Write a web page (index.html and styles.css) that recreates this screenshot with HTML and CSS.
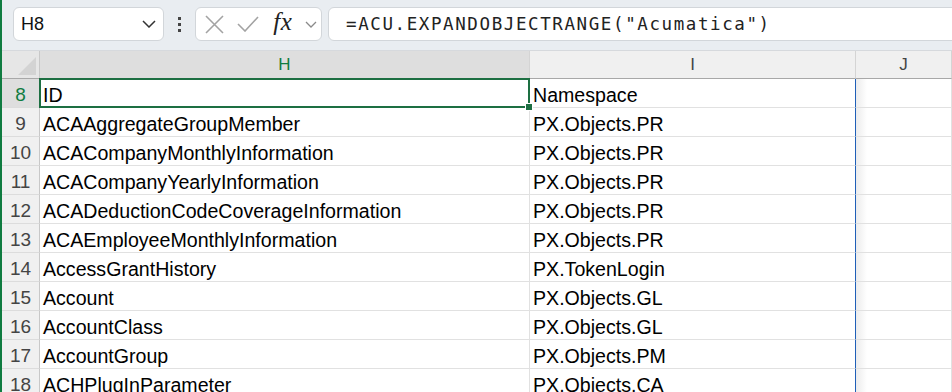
FILE: index.html
```html
<!DOCTYPE html>
<html>
	<head>
		<meta charset="utf-8">
		<title>Excel - ACU.EXPANDOBJECTRANGE</title>
		<link rel="stylesheet" href="styles.css">
	</head>
	<body>
		<div class="app">
			<!-- formula bar -->
			<div class="toolbar">
				<div class="namebox">
					<span class="ref">H8</span>
					<svg class="chev" width="14" height="8" viewBox="0 0 14 8"><path d="M1 1l6 6 6-6" fill="none" stroke="#333" stroke-width="1.5"/></svg>
				</div>
				<div class="more">
					<i></i><i></i><i></i>
				</div>
				<div class="fxbtns">
					<svg width="19" height="19" viewBox="0 0 19 19"><path d="M1 1l17 17M18 1L1 18" fill="none" stroke="#a3a3a3" stroke-width="1.6"/></svg>
					<svg width="22" height="16" viewBox="0 0 22 16"><path d="M1 8l7 7L21 1" fill="none" stroke="#a3a3a3" stroke-width="1.6"/></svg>
					<span class="fx">fx</span>
					<svg width="12" height="7" viewBox="0 0 12 7"><path d="M1 1l5 5 5-5" fill="none" stroke="#8a8a8a" stroke-width="1.3"/></svg>
				</div>
				<div class="formula">=ACU.EXPANDOBJECTRANGE("Acumatica")</div>
			</div>

			<!-- sheet -->
			<div class="sheet">
				<div class="corner"><span class="tri"></span></div>
				<div class="colhead sel">H</div>
				<div class="colhead">I</div>
				<div class="colhead">J</div>

				<div class="rowhead sel">8</div>
				<div class="cell active">ID</div>
				<div class="cell edge">Namespace</div>
				<div class="cell shade"></div>

				<div class="rowhead">9</div>
				<div class="cell">ACAAggregateGroupMember</div>
				<div class="cell edge">PX.Objects.PR</div>
				<div class="cell shade"></div>

				<div class="rowhead">10</div>
				<div class="cell">ACACompanyMonthlyInformation</div>
				<div class="cell edge">PX.Objects.PR</div>
				<div class="cell shade"></div>

				<div class="rowhead">11</div>
				<div class="cell">ACACompanyYearlyInformation</div>
				<div class="cell edge">PX.Objects.PR</div>
				<div class="cell shade"></div>

				<div class="rowhead">12</div>
				<div class="cell">ACADeductionCodeCoverageInformation</div>
				<div class="cell edge">PX.Objects.PR</div>
				<div class="cell shade"></div>

				<div class="rowhead">13</div>
				<div class="cell">ACAEmployeeMonthlyInformation</div>
				<div class="cell edge">PX.Objects.PR</div>
				<div class="cell shade"></div>

				<div class="rowhead">14</div>
				<div class="cell">AccessGrantHistory</div>
				<div class="cell edge">PX.TokenLogin</div>
				<div class="cell shade"></div>

				<div class="rowhead">15</div>
				<div class="cell">Account</div>
				<div class="cell edge">PX.Objects.GL</div>
				<div class="cell shade"></div>

				<div class="rowhead">16</div>
				<div class="cell">AccountClass</div>
				<div class="cell edge">PX.Objects.GL</div>
				<div class="cell shade"></div>

				<div class="rowhead">17</div>
				<div class="cell">AccountGroup</div>
				<div class="cell edge">PX.Objects.PM</div>
				<div class="cell shade"></div>

				<div class="rowhead">18</div>
				<div class="cell">ACHPlugInParameter</div>
				<div class="cell edge">PX.Objects.CA</div>
				<div class="cell shade"></div>
			</div>
		</div>
	</body>
</html>
```

FILE: styles.css
```css
html,
body {
	margin: 0;
	height: 100%;
	overflow: hidden;
	background: #fff;
}

.app {
	height: 100%;
	border-left: 2px solid #107c41;
	font-family: "Liberation Sans", Arial, sans-serif;
	color: #000;
}

/* formula bar */
.toolbar {
	height: 51px;
	border-bottom: 1px solid #d6d9dd;
	background: #e9edf1;
	display: flex;
	align-items: flex-start;
	padding: 7px 0 0 11px;
	box-sizing: border-box;
	overflow: hidden;
}

.namebox,
.fxbtns,
.formula {
	height: 34px;
	box-sizing: border-box;
	background: #fff;
	border: 1px solid #d2d6da;
	border-radius: 6px;
	display: flex;
	align-items: center;
}

.namebox {
	width: 151px;
	padding: 0 7px 0 7px;
	justify-content: space-between;
}

.namebox .ref {
	font-size: 18px;
	color: #111;
}

.more {
	width: 4px;
	margin: 10px 13px 0 14px;
	display: flex;
	flex-direction: column;
	gap: 3px;
}

.more i {
	width: 3px;
	height: 3px;
	background: #444;
	display: block;
}

.fxbtns {
	width: 127px;
	margin-right: 6px;
	padding: 0 4px 0 9px;
	gap: 0;
	justify-content: space-between;
}

.fx {
	font-family: "Liberation Serif", "Times New Roman", serif;
	font-style: italic;
	font-size: 25px;
	color: #222;
	margin: -4px 0 0 2px;
	letter-spacing: 0.5px;
}

.formula {
	flex: 1;
	margin-right: -12px;
	padding-left: 17px;
	font-family: "DejaVu Sans Mono", "Liberation Mono", monospace;
	font-size: 17.5px;
	letter-spacing: 1.6px;
	color: #222;
}

/* sheet grid */
.sheet {
	display: grid;
	grid-template-columns: 38px 490px 326px 96px;
	grid-template-rows: 28px;
	grid-auto-rows: 29px;
}

.sheet > div {
	box-sizing: border-box;
	border-right: 1px solid #e1e1e1;
	border-bottom: 1px solid #e1e1e1;
}

.corner {
	background: #e6e6e6;
	position: relative;
	border-bottom: 1px solid #a8a8a8 !important;
	border-right: 1px solid #c8c8c8 !important;
}

.corner .tri {
	position: absolute;
	right: 3px;
	bottom: 3px;
	width: 0;
	height: 0;
	border-left: 18px solid transparent;
	border-bottom: 18px solid #d3d3d3;
}

.colhead {
	background: #f0f0f0;
	border-right-color: #d4d4d4 !important;
	border-bottom: 1px solid #a8a8a8 !important;
	display: flex;
	align-items: center;
	justify-content: center;
	font-size: 17px;
	color: #444;
	padding-top: 1px;
}

.colhead.sel {
	background: #dedede;
	color: #107c41;
}

.rowhead {
	background: #f0f0f0;
	border-right: 1px solid #c8c8c8 !important;
	border-bottom-color: #dcdcdc !important;
	display: flex;
	align-items: center;
	justify-content: center;
	font-size: 19px;
	color: #444;
	padding-top: 3px;
}

.rowhead.sel {
	background: #dedede;
	color: #107c41;
}

.cell {
	font-size: 19.6px;
	line-height: 29px;
	padding: 2px 0 0 3px;
	white-space: nowrap;
	overflow: hidden;
}

.cell.edge {
	border-right: 1px solid #1f5fb8;
}

.cell.shade {
	background: linear-gradient(to right, #ececec, #fff 11px);
}

.cell.active {
	position: relative;
	overflow: visible;
}

.cell.active::after {
	content: "";
	position: absolute;
	left: -1px;
	top: -1px;
	right: -1px;
	bottom: -1px;
	border: 2px solid #1d6f42;
}

.cell.active::before {
	content: "";
	position: absolute;
	right: -4px;
	bottom: -4px;
	width: 6px;
	height: 6px;
	background: #1d6f42;
	border: 1px solid #fff;
	z-index: 2;
}
```
